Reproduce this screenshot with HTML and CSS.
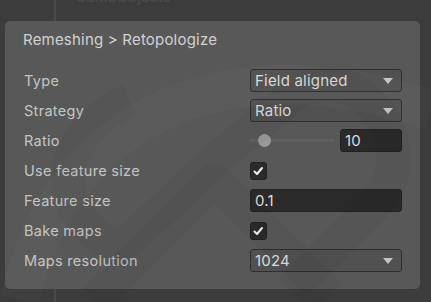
FILE: index.html
```html
<!DOCTYPE html>
<html>
  <head>
    <title>Remeshing</title>
    <link rel="stylesheet" href="styles.css">
  </head>
  <body>
    <svg class="watermark" width="431" height="302" viewBox="0 0 431 302">
      <path d="M20 300 C 60 120, 220 40, 431 110" class="arc" />
      <path d="M95 300 L 215 180 L 330 295" class="band" />
      <path d="M130 100 C 60 130, 40 210, 120 250 L 215 160 L 300 90 C 360 60, 420 140, 380 200 L 290 290" class="band" />
    </svg>
    <div class="hierarchy">
      <span class="line"></span>
      <span class="name">GameObjects</span>
    </div>
    <section class="panel">
      <h1 class="title">Remeshing &gt; Retopologize</h1>
      <div class="fields">
        <label>Type</label>
        <div class="dropdown">Field aligned<span class="arrow"></span></div>

        <label>Strategy</label>
        <div class="dropdown">Ratio<span class="arrow"></span></div>

        <label>Ratio</label>
        <div class="slider">
          <div class="track"><span class="thumb"></span></div>
          <div class="input small">10</div>
        </div>

        <label>Use feature size</label>
        <div>
          <span class="check">
            <svg width="15" height="16" viewBox="0 0 15 16"><path d="M3.5 8.5 L6 11 L11 5" /></svg>
          </span>
        </div>

        <label>Feature size</label>
        <div class="input">0.1</div>

        <label>Bake maps</label>
        <div>
          <span class="check">
            <svg width="15" height="16" viewBox="0 0 15 16"><path d="M3.5 8.5 L6 11 L11 5" /></svg>
          </span>
        </div>

        <label>Maps resolution</label>
        <div class="dropdown">1024<span class="arrow"></span></div>
      </div>
    </section>
    <div class="hierarchy bottom">
      <span class="line"></span>
    </div>
  </body>
</html>
```

FILE: styles.css
```css
body {
  margin: 0;
  background: #3c3c3c;
  font-family: 'Inter', 'Noto Sans', sans-serif;
  color: #c8c8c8;
  width: 431px;
  height: 302px;
  overflow: hidden;
  position: relative;
}

.watermark {
  position: absolute;
  left: 0;
  top: 0;
  z-index: 2;
  pointer-events: none;
}

.watermark .arc {
  fill: none;
  stroke: rgba(255, 255, 255, 0.02);
  stroke-width: 40;
}

.watermark .band {
  fill: none;
  stroke: rgba(0, 0, 0, 0.03);
  stroke-width: 34;
  stroke-linejoin: round;
}

.hierarchy {
  height: 21px;
  display: flex;
  padding-left: 54px;
  gap: 19px;
  overflow: hidden;
}

.hierarchy .line {
  width: 2px;
  background: #4a4a4a;
}

.hierarchy .name {
  font-size: 15px;
  line-height: 18px;
  color: #4c4c4c;
  margin-top: -12px;
}

.hierarchy.bottom {
  height: 13px;
}

.panel {
  position: relative;
  z-index: 1;
  height: 268px;
  margin: 0 11px 0 5px;
  background: #585858;
  border-radius: 5px;
  box-sizing: border-box;
  padding: 10px 0 0 18px;
}

.title {
  margin: 0;
  font-size: 15px;
  font-weight: 400;
  line-height: 17px;
  color: #d2d2d2;
  letter-spacing: 0.2px;
}

.fields {
  margin-top: 21px;
  display: grid;
  grid-template-columns: 227px 152px;
  grid-auto-rows: 23px;
  row-gap: 7px;
  align-items: center;
}

.fields label {
  font-size: 14.5px;
  color: #c4c4c4;
  padding-left: 1px;
  letter-spacing: 0.3px;
}

.dropdown {
  height: 23px;
  box-sizing: border-box;
  background: #515151;
  border: 1px solid #2e2e2e;
  border-radius: 3px;
  display: flex;
  align-items: center;
  justify-content: space-between;
  padding: 0 8px 0 4px;
  font-size: 15px;
  color: #dcdcdc;
  letter-spacing: 0.2px;
}

.arrow {
  width: 0;
  height: 0;
  border-left: 5px solid transparent;
  border-right: 5px solid transparent;
  border-top: 6px solid #c4c4c4;
}

.input {
  height: 23px;
  box-sizing: border-box;
  background: #2a2a2a;
  border: 1px solid #212121;
  border-radius: 3px;
  display: flex;
  align-items: center;
  padding: 0 4px;
  font-size: 15px;
  color: #dcdcdc;
  letter-spacing: 0.2px;
}

.slider {
  display: flex;
  align-items: center;
  gap: 6px;
}

.track {
  width: 84px;
  height: 3px;
  background: #5f5f5f;
  position: relative;
}

.thumb {
  position: absolute;
  left: 8px;
  top: -5px;
  width: 13px;
  height: 13px;
  border-radius: 50%;
  background: #999999;
}

.input.small {
  width: 62px;
}

.check {
  display: flex;
  align-items: center;
  justify-content: center;
  width: 17px;
  height: 18px;
  box-sizing: border-box;
  background: #2b2b2b;
  border: 1px solid #222;
  border-radius: 3px;
}

.check svg path {
  fill: none;
  stroke: #f0f0f0;
  stroke-width: 2;
  stroke-linecap: round;
  stroke-linejoin: round;
}
```
